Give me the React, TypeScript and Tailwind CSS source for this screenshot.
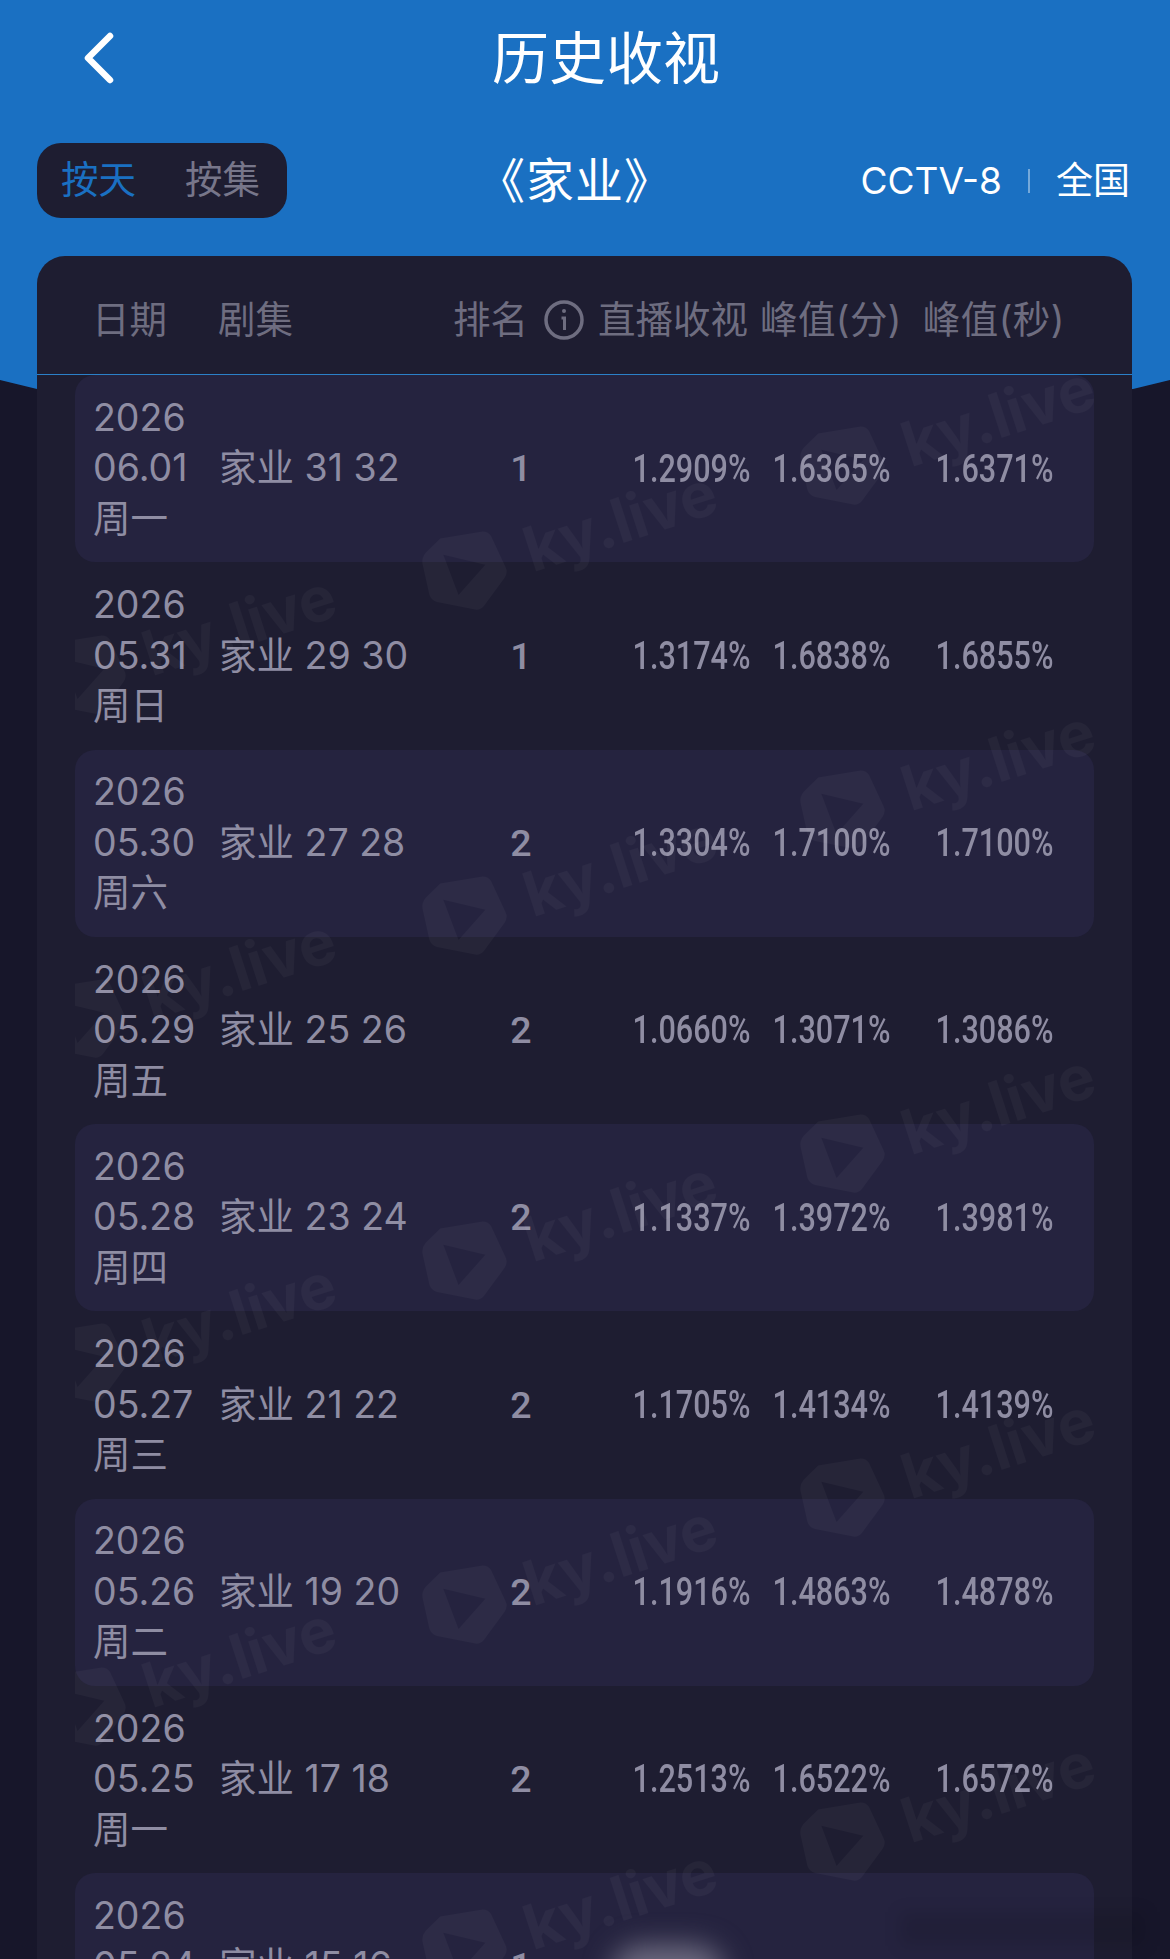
const rows = [
  { day: "06.01", week: "周一", ep: "31 32", rank: "1", live: "1.2909%", min: "1.6365%", sec: "1.6371%" },
  { day: "05.31", week: "周日", ep: "29 30", rank: "1", live: "1.3174%", min: "1.6838%", sec: "1.6855%" },
  { day: "05.30", week: "周六", ep: "27 28", rank: "2", live: "1.3304%", min: "1.7100%", sec: "1.7100%" },
  { day: "05.29", week: "周五", ep: "25 26", rank: "2", live: "1.0660%", min: "1.3071%", sec: "1.3086%" },
  { day: "05.28", week: "周四", ep: "23 24", rank: "2", live: "1.1337%", min: "1.3972%", sec: "1.3981%" },
  { day: "05.27", week: "周三", ep: "21 22", rank: "2", live: "1.1705%", min: "1.4134%", sec: "1.4139%" },
  { day: "05.26", week: "周二", ep: "19 20", rank: "2", live: "1.1916%", min: "1.4863%", sec: "1.4878%" },
  { day: "05.25", week: "周一", ep: "17 18", rank: "2", live: "1.2513%", min: "1.6522%", sec: "1.6572%" },
  { day: "05.24", week: "周日", ep: "15 16", rank: "1", live: "", min: "", sec: "" },
];

// repeated ky.live stamp, clipped to the list area (offsets are from its corner)
const marks = [
  [-33, 271], [-33, 615], [-33, 959], [-33, 1303], [-33, 1647],
  [348, 167], [348, 512], [348, 857], [348, 1201], [348, 1545],
  [726, 62], [726, 406], [726, 750], [726, 1094], [726, 1438],
];

function Stamp({ x, y }: { x: number; y: number }) {
  return (
    <div
      className="absolute flex items-center gap-[22px] -rotate-[18deg] origin-left text-white/[0.035]"
      style={{ left: x, top: y }}
    >
      <svg width="86" height="86" viewBox="0 0 84 84" fill="currentColor">
        <path fillRule="evenodd" d="M30 4 L70 10 Q76 11 78 17 L82 50 Q83 56 78 60 L50 80 Q45 83 40 80 L8 62 Q3 59 3 53 L6 22 Q7 16 12 13 Z M28 20 L30 62 L64 42 Z" />
      </svg>
      <span className="font-['Inter',sans-serif] font-bold text-[62px] leading-none">ky.live</span>
    </div>
  );
}

function Pct({ value, className }: { value: string; className: string }) {
  return (
    <div className={`flex justify-end ${className}`}>
      <span className="shrink-0 scale-x-[0.805] origin-right font-['Roboto',sans-serif] font-medium text-[38px] leading-none text-[#8f8da3]">
        {value}
      </span>
    </div>
  );
}

export default function App() {
  return (
    <div className="relative h-[1959px] w-[1170px] overflow-hidden bg-[#17162a] font-['Inter','Noto_Sans_CJK_SC',sans-serif]">
      {/* blue backdrop, drops a little towards the table */}
      <div className="bg-[#1a70c2] h-[390px] [clip-path:polygon(0_0,100%_0,100%_380px,1133px_389px,37px_389px,0_380px)]">
        <div className="relative flex h-[116px] items-center justify-center">
          <svg className="absolute left-[81px] top-[32px]" width="34" height="52" viewBox="0 0 34 52" fill="none">
            <path d="M29 4 L7 26 L29 48" stroke="white" strokeWidth="6.5" strokeLinecap="round" strokeLinejoin="round" />
          </svg>
          <span className="ml-[42px] text-[57px] leading-none text-white">历史收视</span>
        </div>
        <div className="relative mt-[27px] flex items-center pl-[37px] pr-[40px]">
          <div className="flex h-[75px] w-[250px] items-center gap-[49px] rounded-[24px] bg-[#1e1d31] pl-[24px] text-[37.5px]">
            <span className="text-[#1a70c2]">按天</span>
            <span className="text-[#77768a]">按集</span>
          </div>
          <span className="ml-[190px] text-[48px] tracking-[1px] leading-none text-white">《家业》</span>
          <div className="ml-auto flex items-center text-[37px] text-white">
            <span>CCTV-8</span>
            <span className="ml-[26px] mr-[26px] h-[24px] w-[2px] bg-white/40" />
            <span>全国</span>
          </div>
        </div>
      </div>

      <div className="absolute left-[37px] top-[256px] h-[1703px] w-[1095px] rounded-t-[28px] bg-[#1e1d31]">
        <div className="flex h-[119px] items-center border-b border-[#2b80c8] pt-[10px] text-[37.5px] leading-none text-[#6e6d80]">
          <span className="ml-[55px]">日期</span>
          <span className="ml-[51px]">剧集</span>
          <span className="ml-[160px]">排名</span>
          <svg className="ml-[16px]" width="40" height="40" viewBox="0 0 40 40" fill="none" stroke="#6e6d80" strokeWidth="3.5">
            <circle cx="20" cy="20" r="18" />
            <path d="M17.5 18 H20.5 V30" strokeWidth="3" />
            <circle cx="20" cy="11" r="2" fill="#6e6d80" stroke="none" />
          </svg>
          <span className="ml-[14px]">直播收视</span>
          <span className="ml-[12px] tracking-[0.4px]">峰值(分)</span>
          <span className="ml-[21px] tracking-[0.4px]">峰值(秒)</span>
        </div>
        <div className="px-[38px]">
          {rows.map((r, i) => (
            <div
              key={r.day}
              className={`flex h-[187.25px] items-center rounded-[20px] pl-[18px] text-[37.5px] leading-[50.5px] text-[#8f8da3] ${i % 2 === 0 ? "bg-[#25233f]" : ""}`}
            >
              <div className="w-[126px]">
                <div>2026</div>
                <div>{r.day}</div>
                <div>{r.week}</div>
              </div>
              <div className="w-[252px]">家业 {r.ep}</div>
              <div className="w-[100px] text-center font-['Roboto',sans-serif] font-medium">{r.rank}</div>
              <Pct value={r.live} className="w-[180px]" />
              <Pct value={r.min} className="w-[140px]" />
              <Pct value={r.sec} className="w-[163px]" />
            </div>
          ))}
        </div>
      </div>

      <div className="pointer-events-none absolute left-[75px] top-[375px] h-[1584px] w-[1021px] overflow-hidden">
        {marks.map(([x, y]) => (
          <Stamp key={`${x}-${y}`} x={x} y={y} />
        ))}
      </div>
      <div className="absolute left-[612px] top-[1945px] h-[60px] w-[112px] rounded-full bg-[#6d6b80] blur-[14px]" />
      <div className="absolute left-[900px] top-[1912px] h-[34px] w-[245px] bg-black/10 blur-[8px]" />
    </div>
  );
}
